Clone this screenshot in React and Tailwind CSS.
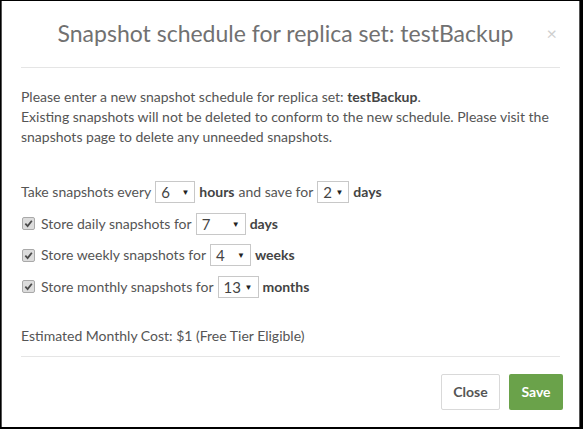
import React from 'react';

const font = { fontFamily: 'Lato, "Open Sans", sans-serif' };

function Select({ value, width }) {
  return (
    <span
      className={`inline-flex items-center justify-between h-[22px] border border-[#c8c8c8] bg-white pl-[5px] pr-[5px] mx-[4px] text-[15px] text-[#444] ${width}`}
    >
      <span>{value}</span>
      <span className="text-[8px] text-[#222]">▼</span>
    </span>
  );
}

function Check() {
  return (
    <span className="inline-flex items-center justify-center w-[13px] h-[13px] border border-[#a9a9a9] bg-[#dcdcdc] rounded-[2px] ml-[1px] mr-[6px]">
      <svg width="9" height="9" viewBox="0 0 10 10">
        <path d="M1.5 5.2 L4 7.8 L8.7 2" fill="none" stroke="#4a4a4a" strokeWidth="2" />
      </svg>
    </span>
  );
}

export default function App() {
  return (
    <div className="w-[583px] h-[429px] bg-black pt-[1px] pl-[1px] overflow-hidden" style={font}>
      <div className="w-[579px] h-[426px] bg-white border-l border-r border-[#555] flex flex-col">
        {/* Header */}
        <div className="relative mx-[19px] h-[67px] border-b border-[#e5e5e5] flex items-center justify-center">
          <h1 className="text-[23px] text-[#717171] -mt-[2px] -ml-[10px]">Snapshot schedule for replica set: testBackup</h1>
          <span className="absolute right-[3px] top-[19px] text-[18px] text-[#cfcfcf]">×</span>
        </div>

        {/* Body */}
        <div className="mx-[19px] pt-[19px] text-[14px] leading-[20px] text-[#555]">
          <p>
            Please enter a new snapshot schedule for replica set: <b className="text-[#444]">testBackup</b>.
            <br />
            Existing snapshots will not be deleted to conform to the new schedule. Please visit the snapshots page to delete any unneeded snapshots.
          </p>

          <div className="mt-[34px] flex flex-col gap-[9.5px]">
            <div className="flex items-center h-[22px]">
              <span>Take snapshots every</span>
              <Select value="6" width="w-[40px]" />
              <b className="text-[#444]">hours</b>
              <span className="ml-[4px]">and save for</span>
              <Select value="2" width="w-[32px]" />
              <b className="text-[#444]">days</b>
            </div>
            <div className="flex items-center h-[22px]">
              <Check />
              <span>Store daily snapshots for</span>
              <Select value="7" width="w-[50px]" />
              <b className="text-[#444]">days</b>
            </div>
            <div className="flex items-center h-[22px]">
              <Check />
              <span>Store weekly snapshots for</span>
              <Select value="4" width="w-[41px]" />
              <b className="text-[#444]">weeks</b>
            </div>
            <div className="flex items-center h-[22px]">
              <Check />
              <span>Store monthly snapshots for</span>
              <Select value="13" width="w-[41px]" />
              <b className="text-[#444]">months</b>
            </div>
          </div>

          <p className="mt-[28px] pb-[10px] border-b border-[#e5e5e5]">Estimated Monthly Cost: $1 (Free Tier Eligible)</p>
        </div>

        {/* Footer */}
        <div className="ml-[19px] mr-[16px] pt-[17px] flex justify-end gap-[9px]">
          <button className="w-[59px] h-[36px] border border-[#d9d9d9] bg-white text-[14px] font-bold text-[#555] rounded-[2px]">
            Close
          </button>
          <button className="w-[54px] h-[36px] bg-[#6aa24a] text-[14px] font-bold text-white rounded-[2px]">
            Save
          </button>
        </div>
      </div>
    </div>
  );
}
